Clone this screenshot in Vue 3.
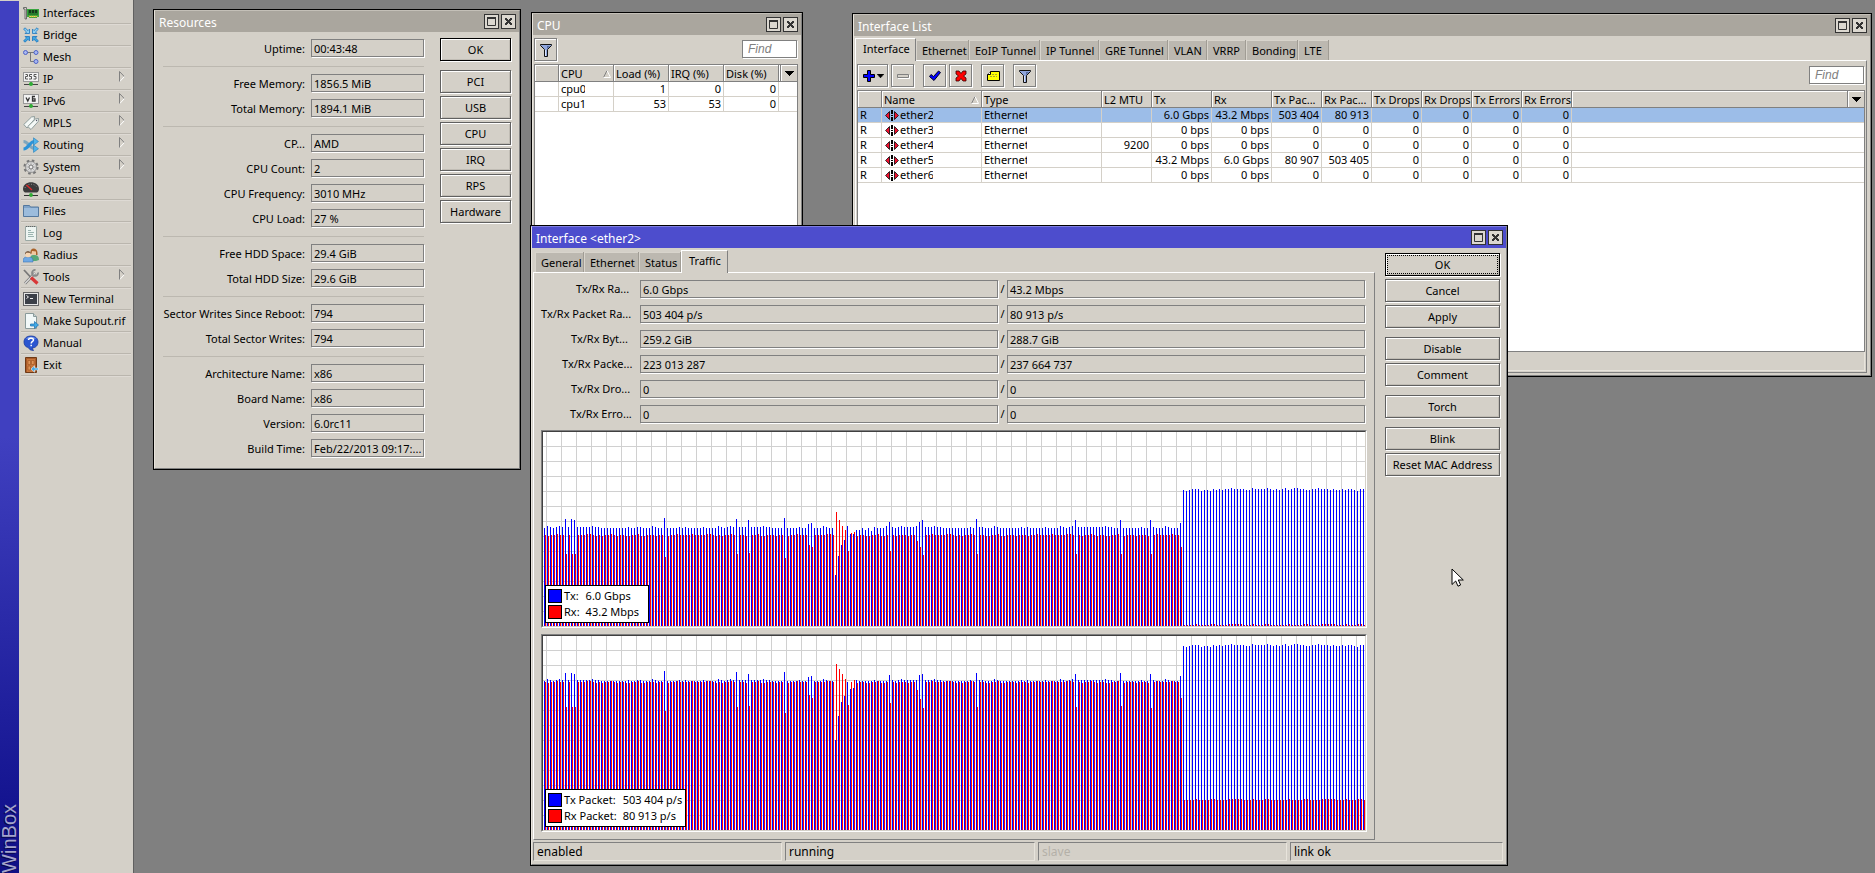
<script setup>
import { ref } from 'vue'

const menu = [
  { id: 'interfaces', label: 'Interfaces' },
  { id: 'bridge', label: 'Bridge' },
  { id: 'mesh', label: 'Mesh' },
  { id: 'ip', label: 'IP', sub: true },
  { id: 'ipv6', label: 'IPv6', sub: true },
  { id: 'mpls', label: 'MPLS', sub: true },
  { id: 'routing', label: 'Routing', sub: true },
  { id: 'system', label: 'System', sub: true },
  { id: 'queues', label: 'Queues' },
  { id: 'files', label: 'Files' },
  { id: 'log', label: 'Log' },
  { id: 'radius', label: 'Radius' },
  { id: 'tools', label: 'Tools', sub: true },
  { id: 'terminal', label: 'New Terminal' },
  { id: 'supout', label: 'Make Supout.rif' },
  { id: 'manual', label: 'Manual' },
  { id: 'exit', label: 'Exit' },
]

const resourceGroups = [
  [['Uptime:', '00:43:48']],
  [['Free Memory:', '1856.5 MiB'], ['Total Memory:', '1894.1 MiB']],
  [['CP...', 'AMD'], ['CPU Count:', '2'], ['CPU Frequency:', '3010 MHz'], ['CPU Load:', '27 %']],
  [['Free HDD Space:', '29.4 GiB'], ['Total HDD Size:', '29.6 GiB']],
  [['Sector Writes Since Reboot:', '794'], ['Total Sector Writes:', '794']],
  [['Architecture Name:', 'x86'], ['Board Name:', 'x86'], ['Version:', '6.0rc11'], ['Build Time:', 'Feb/22/2013 09:17:...']],
]
const resourceButtons = ['PCI', 'USB', 'CPU', 'IRQ', 'RPS', 'Hardware']

const cpuRows = [['cpu0', '1', '0', '0'], ['cpu1', '53', '53', '0']]

const listTabs = ['Interface', 'Ethernet', 'EoIP Tunnel', 'IP Tunnel', 'GRE Tunnel', 'VLAN', 'VRRP', 'Bonding', 'LTE']
const listCols = ['Type', 'L2 MTU', 'Tx', 'Rx', 'Tx Pac...', 'Rx Pac...', 'Tx Drops', 'Rx Drops', 'Tx Errors', 'Rx Errors']
const ifaces = [
  { name: 'ether2', cells: ['', '6.0 Gbps', '43.2 Mbps', '503 404', '80 913', '0', '0', '0', '0'] },
  { name: 'ether3', cells: ['', '0 bps', '0 bps', '0', '0', '0', '0', '0', '0'] },
  { name: 'ether4', cells: ['9200', '0 bps', '0 bps', '0', '0', '0', '0', '0', '0'] },
  { name: 'ether5', cells: ['', '43.2 Mbps', '6.0 Gbps', '80 907', '503 405', '0', '0', '0', '0'] },
  { name: 'ether6', cells: ['', '0 bps', '0 bps', '0', '0', '0', '0', '0', '0'] },
]
const selected = ref('ether2')

const dialogTabs = ['General', 'Ethernet', 'Status', 'Traffic']
const traffic = [
  { label: 'Tx/Rx Ra...', width: 58, tx: '6.0 Gbps', rx: '43.2 Mbps' },
  { label: 'Tx/Rx Packet Ra...', width: 93, tx: '503 404 p/s', rx: '80 913 p/s' },
  { label: 'Tx/Rx Byt...', width: 63, tx: '259.2 GiB', rx: '288.7 GiB' },
  { label: 'Tx/Rx Packe...', width: 72, tx: '223 013 287', rx: '237 664 737' },
  { label: 'Tx/Rx Dro...', width: 63, tx: '0', rx: '0' },
  { label: 'Tx/Rx Erro...', width: 64, tx: '0', rx: '0' },
]
const dialogButtons = [['OK', 'Cancel', 'Apply'], ['Disable', 'Comment'], ['Torch'], ['Blink', 'Reset MAC Address']]

const HEIGHT = 194
const COUNT = 274
const SWITCH = 213
const txWave = '021012111111111121100000000010011000210000000101000001000'
const rxWave = '1011211112111122101011210110011200111011'
const highWave = '1012220110212122322221132222321212312332211223222121121221022'
const highRx = '0000100001100001111100010001100'

function series(base, wave, spikes, high, highBase) {
  return Array.from({ length: COUNT }, (_, i) => {
    if (i >= SWITCH) return highBase + Number(high[(i - SWITCH) % high.length])
    return spikes[i] ?? base + Number(wave[i % wave.length])
  })
}
const bars = (values, offset) =>
  values.map((v, i) => `M${i * 3 + offset} ${HEIGHT - v}h1v${v}h-1z`).join('')

const charts = [
  {
    tx: series(98, txWave, { 7: 107, 9: 107, 10: 106, 40: 108, 64: 107, 68: 106, 80: 108, 88: 102, 89: 103, 97: 51, 98: 70, 99: 81, 100: 86, 101: 100, 102: 92, 103: 92, 104: 96, 105: 96, 107: 96, 109: 95, 114: 100, 115: 104, 124: 100, 125: 104, 126: 106, 144: 107, 177: 106, 192: 106, 202: 106, 212: 103 }, highWave, 135),
    rx: series(90, rxWave, { 7: 72, 9: 72, 10: 72, 40: 69, 64: 72, 68: 73, 80: 68, 88: 81, 89: 79, 97: 114, 98: 106, 99: 100, 100: 96, 101: 75, 102: 93, 103: 94, 115: 75, 124: 85, 125: 79, 126: 71, 144: 72, 177: 72, 192: 72, 202: 72, 212: 79 }, highRx, 1),
    legend: [['Tx:', '6.0 Gbps'], ['Rx:', '43.2 Mbps']],
  },
  {
    tx: series(149, txWave, { 7: 157, 9: 157, 10: 156, 40: 159, 64: 158, 68: 156, 80: 158, 88: 153, 89: 154, 97: 90, 98: 114, 99: 128, 100: 134, 101: 148, 102: 141, 103: 142, 115: 155, 125: 155, 126: 156, 144: 157, 177: 156, 192: 157, 202: 156, 212: 154 }, highWave, 183),
    rx: series(147, rxWave, { 7: 123, 9: 123, 10: 123, 40: 119, 64: 123, 68: 124, 80: 117, 88: 135, 89: 132, 97: 166, 98: 161, 99: 156, 100: 151, 101: 125, 102: 148, 103: 150, 115: 127, 124: 140, 125: 131, 126: 122, 144: 123, 177: 123, 192: 124, 202: 122, 212: 132 }, highRx, 30),
    legend: [['Tx Packet:', '503 404 p/s'], ['Rx Packet:', '80 913 p/s']],
  },
]
const statuses = ['enabled', 'running', 'slave', 'link ok']
</script>

<template>
  <div class="screen">
    <svg class="defs" aria-hidden="true">
      <defs>
        <symbol id="i-max" viewBox="0 0 15 15"><path d="M3 3h9v2H3z" fill="#333" /><path d="M3.500 4v7.500h8V4" fill="none" stroke="#333" /></symbol>
        <symbol id="i-close" viewBox="0 0 15 15"><path d="M4 4h2v1h1v1h1V5h1V4h2v2h-1v1H9v1h1v1h1v2H9v-1H8V9H7v1H6v1H4V9h1V8h1V7H5V6H4z" fill="#333" /></symbol>
        <symbol id="i-filter" viewBox="0 0 16 16"><path d="M2.500 2.500h11v1l-4 4v7h-3v-7l-4-4z" fill="#8fa5dc" stroke="#111" /><path d="M9 4h3L9 7z" fill="#53699f" /><path d="M7 8h1v6H7z" fill="#dbe4fa" /></symbol>
        <symbol id="i-sort" viewBox="0 0 8 8"><path d="M.5 7.500L4 .5" stroke="#808080" fill="none" /><path d="M4 .5l3.500 7h-7" stroke="#fff" fill="none" /></symbol>
        <symbol id="i-down" viewBox="0 0 9 5"><path d="M0 0h9v1H8v1H7v1H6v1H5v1H4V4H3V3H2V2H1V1H0z" /></symbol>
        <symbol id="i-ether" viewBox="0 0 14 11"><path d="M6 0h2v4H6zM6 5h2v1H6zM6 7h2v4H6z" fill="#000" /><path d="M4.500 1.500v8L.6 5.500zM9.500 1.500v8l3.900-4z" fill="#f01030" stroke="#000" stroke-width=".8" /></symbol>

        <symbol id="i-interfaces" viewBox="0 0 16 16"><path d="M.5 2.500h3V14H2V4H.5z" fill="#d8d8d0" stroke="#555" stroke-width=".8" /><path d="M4 4h12v8h-2v1H6v-1H4z" fill="#3aa53f" /><path d="M5 5h10v5H5z" fill="#257a2c" /><path d="M6 5h2v3H6zM9 5h2v3H9zM12 5h2v3h-2z" fill="#14391a" /><path d="M6 11h8v1H6z" fill="#e8dc60" stroke="#b8a020" stroke-dasharray="1 1" stroke-width=".6" /></symbol>
        <symbol id="i-bridge" viewBox="0 0 16 16"><g stroke="#1c75bd" stroke-width=".8"><path d="M6.500 6.500H2l1.500-1.500L.6 2.200 2 .8 5 3.600l1.500-1.500z" fill="#8ccef3" /><path d="M9.500 6.500H14l-1.500-1.500 2.900-2.800L14 .8l-3 2.800-1.500-1.500z" fill="#8ccef3" /><path d="M6.500 9.500H2l1.500 1.500-2.900 2.800L2 15.200l3-2.800 1.500 1.500z" fill="#3ea5e2" /><path d="M9.500 9.500H14l-1.500 1.500 2.900 2.800-1.400 1.400-3-2.800-1.500 1.500z" fill="#3ea5e2" /></g></symbol>
        <symbol id="i-mesh" viewBox="0 0 16 16"><path d="M4 3.500h7M7.500 4v8.500H11" fill="none" stroke="#777" /><g fill="#a9b8f0" stroke="#4e63c8"><circle cx="2.500" cy="3.500" r="2" /><circle cx="13" cy="3.500" r="2" /><circle cx="13" cy="12.500" r="2" /></g></symbol>
        <symbol id="i-ip" viewBox="0 0 16 16"><rect x=".5" y="1.500" width="15" height="9" fill="#f2f2f2" stroke="#999" /><path d="M2.500 3.500h2v2h-2v2.500h2.500M9 3.500H6.500V5.500H8.500v2.500H6M13.500 3.500H11V5.500h2v2.500h-2.500" fill="none" stroke="#555" /><path d="M8 11v2M1 13.500h14" stroke="#444" /><circle cx="8" cy="13" r="2" fill="#2fae35" /></symbol>
        <symbol id="i-ipv6" viewBox="0 0 16 16"><rect x=".5" y="1.500" width="15" height="9" fill="#f2f2f2" stroke="#999" /><path d="M3 4.500l1.800 3.500 1.700-3.500M12 3.500H9.500V8H12V5.800H9.500" fill="none" stroke="#333" stroke-width="1.300" /><path d="M8 11v2M1 13.500h14" stroke="#444" /><circle cx="8" cy="13" r="2" fill="#2fae35" /></symbol>
        <symbol id="i-mpls" viewBox="0 0 16 16"><g fill="#f4f8f6" stroke="#7a8c8c" stroke-width=".8"><path d="M.8 9.500L8.500 2l3-.5-.3 3L4 13z" /><path d="M4.800 11.500L12.500 4l3-.5-.3 3L8 14.500z" /></g><circle cx="13.500" cy="5.500" r=".7" fill="#556" /></symbol>
        <symbol id="i-routing" viewBox="0 0 16 16"><path d="M.5 4.500c5 0 6 7 11 7" fill="none" stroke="#7fa6bd" stroke-width="3" /><path d="M.5 12c5 0 6-7.500 11-7.500" fill="none" stroke="#2c93d8" stroke-width="3.200" /><path d="M10.500.8l5 3.700-5 3.700zM10.500 8l5 3.700-5 3.700z" fill="#4eb3ec" stroke="#2a7fb8" stroke-width=".6" /></symbol>
        <symbol id="i-system" viewBox="0 0 16 16"><circle cx="8" cy="8" r="6.300" fill="none" stroke="#777" stroke-width="2.600" stroke-dasharray="2.500 2.450" /><circle cx="8" cy="8" r="5.500" fill="#d8d8d8" stroke="#888" stroke-width=".8" /><path d="M8 3v10M3 8h10M4.500 4.500l7 7M11.500 4.500l-7 7" stroke="#aaa" stroke-width=".8" /><circle cx="8" cy="8" r="2" fill="#eee" stroke="#777" /></symbol>
        <symbol id="i-queues" viewBox="0 0 16 16"><path d="M0 8c0-9 16-9 16 0 0 2-1 3-2 3.500H2C1 11 0 10 0 8z" fill="#3c3c3c" /><path d="M2 7c1-5 11-5 12 0" fill="none" stroke="#8a8a8a" stroke-dasharray="1 1.500" /><path d="M3.500 4L9 9" stroke="#e32828" stroke-width="1.300" /><path d="M1 14.500h14" stroke="#333" /><circle cx="8" cy="14" r="1.900" fill="#2fae35" /></symbol>
        <symbol id="i-files" viewBox="0 0 16 16"><path d="M.5 2.500h6l1 1.500h8v9.500H.5z" fill="#7fa3c8" stroke="#54789e" /><path d="M1 5h14v8H1z" fill="#9cbcdc" /></symbol>
        <symbol id="i-log" viewBox="0 0 16 16"><path d="M2.500 1.500h11v14h-11z" fill="#eef5f2" stroke="#9aa8a4" /><path d="M3 1.500h10" stroke="#666" stroke-dasharray="1 1" /><path d="M5 5.500h3M5 7.500h6M5 9.500h5M5 11.500h6" stroke="#9bb5b0" /></symbol>
        <symbol id="i-radius" viewBox="0 0 16 16"><path d="M7 14c0-5 1-6 4-6s5 1 5 5l-3 1z" fill="#58a878" /><circle cx="11" cy="5" r="3" fill="#f0c8a0" /><path d="M7.500 6c-1-6 7-6 7 0v2h-1.500V4.500l-4-.5-.5 3z" fill="#a8622a" /><path d="M0 15c0-4 1-5 5-5s5 1 5 5z" fill="#6ea8e4" stroke="#3b72b4" stroke-width=".6" /><circle cx="5" cy="7.500" r="2.800" fill="#f6d6b4" /><path d="M2 7.500c-.5-4.500 6.500-4.500 6 0L7 5.800 3.500 5.600z" fill="#5b3a22" /></symbol>
        <symbol id="i-tools" viewBox="0 0 16 16"><path d="M2 14.500L12 4" stroke="#777" stroke-width="2.600" /><path d="M2 14.500L12 4" stroke="#ddd" stroke-width="1.200" /><path d="M15 3.500a3 3 0 1 1-2.500-2.500" fill="none" stroke="#888" stroke-width="1.800" /><path d="M1 1l6.500 7" stroke="#777" stroke-width="1.800" /><path d="M8 8.500l6.500 6" stroke="#d83838" stroke-width="3.200" /></symbol>
        <symbol id="i-terminal" viewBox="0 0 16 16"><rect x=".5" y="1.500" width="15" height="13" fill="#e6e6e6" stroke="#666" /><rect x="2" y="3" width="12" height="10" fill="#3c4048" /><path d="M3.500 4.500l2 1.500-2 1.500M7 7.500h3" fill="none" stroke="#eee" /></symbol>
        <symbol id="i-supout" viewBox="0 0 16 16"><path d="M2.500.5h8l3 3v12h-11z" fill="#f2f8f8" stroke="#8a9a9a" /><path d="M10.500.5v3h3" fill="#c8d4d4" stroke="#8a9a9a" /><path d="M7.500 11h4V8.500l4 3.500-4 3.500V13h-4z" fill="#3fa9e6" stroke="#1c6fae" stroke-width=".7" /></symbol>
        <symbol id="i-manual" viewBox="0 0 16 16"><path d="M8 1c4.500 0 7 2.500 7 6s-2.500 6-6 6l1.500 2.500C7 15.500 6 14 5.500 12.600 2.500 12 1 10 1 7c0-3.500 2.500-6 7-6z" fill="#2a55d0" stroke="#1a3a9c" stroke-width=".8" /><path d="M3 4c2-3 8-3 10 0-3-1-7-1-10 0z" fill="#7a9cf0" /><path d="M5.500 5c0-2.500 5-2.500 5 0 0 1.500-2.300 1.500-2.300 3.500M8.200 9.700v1.500" fill="none" stroke="#fff" stroke-width="1.500" /></symbol>
        <symbol id="i-exit" viewBox="0 0 16 16"><path d="M2.500.5h11v15h-11z" fill="#a85a28" stroke="#6f3a16" /><path d="M4 2h8v13H4z" fill="#c8763c" /><path d="M5 3.500h2.500v4H5zM8.500 3.500H11v4H8.500zM5 9h2.500v4H5z" fill="#e09458" stroke="#9a5220" stroke-width=".6" /><path d="M15.500 11h-4V8.800L8 12l3.500 3.200V13h4z" fill="#3fa9e6" stroke="#e8f4fc" stroke-width=".6" /></symbol>

        <pattern id="grid" width="15" height="15" patternUnits="userSpaceOnUse">
          <path d="M3 0h1v15h-1zM0 14h15v1H0z" fill="#d0d0d0" />
        </pattern>
      </defs>
    </svg>

    <aside class="stripe"><span class="brand">WinBox</span></aside>
    <nav class="menu">
      <button v-for="m in menu" :key="m.id" type="button" class="menu-item">
        <svg class="menu-icon"><use :href="'#i-' + m.id" /></svg>
        <span class="menu-label">{{ m.label }}</span>
        <svg v-if="m.sub" class="menu-arrow" viewBox="0 0 6 11"><path d="M.5 11V.5l5 5.300" fill="none" stroke="#808080" /><path d="M5.500 5.500L.8 10.500" stroke="#fff" /></svg>
      </button>
    </nav>

    <main class="desktop">
      <section class="win win-resources">
        <div class="win-in">
          <header class="title"><h2>Resources</h2>
            <button type="button" class="tbtn" aria-label="Maximize"><svg><use href="#i-max" /></svg></button>
            <button type="button" class="tbtn" aria-label="Close"><svg><use href="#i-close" /></svg></button>
          </header>
          <div class="res-body">
            <form class="res-form">
              <template v-for="(g, gi) in resourceGroups" :key="gi">
                <hr v-if="gi" />
                <div v-for="(r, ri) in g" :key="ri" class="res-row">
                  <label :for="`res-${gi}-${ri}`">{{ r[0] }}</label>
                  <input :id="`res-${gi}-${ri}`" class="field" readonly :value="r[1]" />
                </div>
              </template>
            </form>
            <div class="btn-groups">
              <div class="btn-group"><button type="button" class="btn primary">OK</button></div>
              <div class="btn-group"><button v-for="b in resourceButtons" :key="b" type="button" class="btn">{{ b }}</button></div>
            </div>
          </div>
        </div>
      </section>

      <section class="win win-cpu">
        <div class="win-in">
          <header class="title"><h2>CPU</h2>
            <button type="button" class="tbtn" aria-label="Maximize"><svg><use href="#i-max" /></svg></button>
            <button type="button" class="tbtn" aria-label="Close"><svg><use href="#i-close" /></svg></button>
          </header>
          <div class="cpu-body">
            <div class="toolbar">
              <button type="button" class="tool" aria-label="Filter"><svg><use href="#i-filter" /></svg></button>
              <input class="find" placeholder="Find" aria-label="Find" />
            </div>
            <div class="grid cpu-grid">
              <table>
                <colgroup><col class="c-flag" /><col class="c55" /><col class="c55" /><col class="c55" /><col class="c55" /><col /><col class="c-menu" /></colgroup>
                <thead><tr>
                  <th></th><th><div class="sorted">CPU<svg class="sort"><use href="#i-sort" /></svg></div></th><th>Load (%)</th><th>IRQ (%)</th><th>Disk (%)</th><th></th>
                  <th class="th-menu"><button type="button" aria-label="Columns"><svg class="down"><use href="#i-down" /></svg></button></th>
                </tr></thead>
                <tbody>
                  <tr v-for="r in cpuRows" :key="r[0]">
                    <td></td><td><span class="clip clip-cpu">{{ r[0] }}</span></td>
                    <td v-for="n in 3" :key="n" class="num">{{ r[n] }}</td><td class="rest" colspan="2"></td>
                  </tr>
                </tbody>
              </table>
            </div>
          </div>
        </div>
      </section>

      <section class="win win-list">
        <div class="win-in">
          <header class="title"><h2>Interface List</h2>
            <button type="button" class="tbtn" aria-label="Maximize"><svg><use href="#i-max" /></svg></button>
            <button type="button" class="tbtn" aria-label="Close"><svg><use href="#i-close" /></svg></button>
          </header>
          <div class="list-body">
            <div class="tabs list-tabs" role="tablist">
              <button v-for="(t, i) in listTabs" :key="t" type="button" role="tab" class="tab" :class="{ active: i === 0 }">{{ t }}</button>
            </div>
            <div class="panel list-panel">
              <div class="toolbar">
                <button type="button" class="tool tool-add" aria-label="Add">
                  <svg viewBox="0 0 16 16"><path d="M6.500 2.500h3v4h4v3h-4v4h-3v-4h-4v-3h4z" fill="#00f" stroke="#000" /></svg>
                  <svg class="down-sm"><use href="#i-down" /></svg>
                </button>
                <button type="button" class="tool" aria-label="Remove"><svg viewBox="0 0 16 16"><path d="M2.500 6.500h11v3h-11z" fill="#d4d0c8" stroke="#808080" /><path d="M3 10.500h11.500V7" fill="none" stroke="#fff" /></svg></button>
                <button type="button" class="tool spaced" aria-label="Enable"><svg viewBox="0 0 16 16"><path d="M2.500 8.500L4 6.500l2.500 2 5-5.500 2 1.500L7 12.500z" fill="#00f" stroke="#002" /></svg></button>
                <button type="button" class="tool" aria-label="Disable"><svg viewBox="0 0 16 16"><path d="M3 3h3l2 2.500L10 3h3v3l-2.500 2L13 10v3h-3L8 10.500 6 13H3v-3l2.500-2L3 6z" fill="#f00" stroke="#300" stroke-width=".8" /></svg></button>
                <button type="button" class="tool spaced" aria-label="Comment"><svg viewBox="0 0 16 16"><path d="M5.500 3.500h9v9h-12v-6z" fill="#ff0" stroke="#000" /><path d="M5.500 3.500v3h-3" fill="#fff" stroke="#000" /><path d="M7 6.500h6M5 8.500h7" stroke="#a8a830" stroke-dasharray="2 1" /></svg></button>
                <button type="button" class="tool spaced" aria-label="Filter"><svg><use href="#i-filter" /></svg></button>
                <input class="find" placeholder="Find" aria-label="Find" />
              </div>
              <div class="grid list-grid">
                <table>
                  <colgroup>
                    <col class="c-flag" /><col class="c100" /><col class="c120" /><col class="c50" /><col class="c60" /><col class="c60" />
                    <col v-for="n in 6" :key="n" class="c50" /><col /><col class="c-menu" />
                  </colgroup>
                  <thead><tr>
                    <th></th><th><div class="sorted">Name<svg class="sort"><use href="#i-sort" /></svg></div></th>
                    <th v-for="c in listCols" :key="c">{{ c }}</th><th></th>
                    <th class="th-menu"><button type="button" aria-label="Columns"><svg class="down"><use href="#i-down" /></svg></button></th>
                  </tr></thead>
                  <tbody>
                    <tr v-for="r in ifaces" :key="r.name" :class="{ selected: r.name === selected }" @click="selected = r.name">
                      <td>R</td>
                      <td><div class="iface"><svg class="ether"><use href="#i-ether" /></svg><span class="clip clip-name">{{ r.name }}</span></div></td>
                      <td><span class="clip clip-type">Ethernet</span></td>
                      <td v-for="(c, i) in r.cells" :key="i" class="num">{{ c }}</td>
                      <td class="rest" colspan="2"></td>
                    </tr>
                  </tbody>
                </table>
              </div>
              <div class="list-status"></div>
            </div>
          </div>
        </div>
      </section>

      <section class="win win-dialog">
        <div class="win-in">
          <header class="title focused"><h2>Interface &lt;ether2&gt;</h2>
            <button type="button" class="tbtn" aria-label="Maximize"><svg><use href="#i-max" /></svg></button>
            <button type="button" class="tbtn" aria-label="Close"><svg><use href="#i-close" /></svg></button>
          </header>
          <div class="dlg-body">
            <div class="dlg-main">
              <div class="tabs dlg-tabs" role="tablist">
                <button v-for="t in dialogTabs" :key="t" type="button" role="tab" class="tab" :class="{ active: t === 'Traffic' }">{{ t }}</button>
              </div>
              <div class="panel traffic">
                <div v-for="(r, i) in traffic" :key="i" class="traffic-row">
                  <label :for="'tx-' + i"><span :style="{ width: r.width + 'px' }">{{ r.label }}</span></label>
                  <input :id="'tx-' + i" class="field" readonly :value="r.tx" />
                  <span class="slash">/</span>
                  <input class="field" readonly :value="r.rx" :aria-label="r.label" />
                </div>
                <figure v-for="(c, i) in charts" :key="i" class="chart">
                  <svg class="plot" shape-rendering="crispEdges">
                    <rect width="100%" height="100%" fill="#fff" />
                    <rect width="100%" height="100%" fill="url(#grid)" />
                    <path :d="bars(c.tx, 1)" fill="#00f" />
                    <path :d="bars(c.rx, 2)" fill="#f00" />
                  </svg>
                  <figcaption class="legend">
                    <template v-for="(l, k) in c.legend" :key="k">
                      <i class="swatch" :class="{ rx: k === 1 }"></i><span>{{ l[0] }}</span><span>{{ l[1] }}</span>
                    </template>
                  </figcaption>
                </figure>
              </div>
            </div>
            <div class="btn-groups">
              <div v-for="(g, i) in dialogButtons" :key="i" class="btn-group">
                <button v-for="b in g" :key="b" type="button" class="btn" :class="{ primary: b === 'OK', dotted: b === 'OK' }">{{ b }}</button>
              </div>
            </div>
          </div>
          <footer class="status">
            <span v-for="s in statuses" :key="s" :class="{ off: s === 'slave' }">{{ s }}</span>
          </footer>
        </div>
      </section>

      <svg class="cursor" viewBox="0 0 14 20"><path d="M1 1v15.500l3.700-3.500 2.300 5.200 2.600-1.200-2.300-5h5z" fill="#fff" stroke="#000" /></svg>
    </main>
  </div>
</template>

<style>
body { margin: 0; background: #808080; }
</style>

<style scoped>
* { box-sizing: border-box; }
.screen {
  display: flex; position: relative; min-height: 100vh; overflow: hidden;
  background: #808080; color: #000; font: 11px/16px "Noto Sans", sans-serif;
}
button, input { font: inherit; color: inherit; margin: 0; padding: 0; border: 0; background: none; border-radius: 0; }
.defs { position: absolute; width: 0; height: 0; }

.stripe {
  width: 19px; display: flex; align-items: flex-end; justify-content: center;
  background: linear-gradient(#4040c0 0%, #4040c0 50%, #141490 92%, #101084 100%); border-top: 1px solid #d4d0c8;
}
.brand {
  writing-mode: vertical-rl; transform: rotate(180deg); color: #a4a4cc; text-shadow: -1px -1px 0 #08084c;
  font: 20px/19px "Liberation Sans", Arial, sans-serif;
}
.menu { width: 115px; padding: 2px 2px 0; background: #d4d0c8; border-right: 1px solid #606060; display: flex; flex-direction: column; }
.menu-item {
  height: 22px; padding: 0 6px 0 2px; display: flex; align-items: center; gap: 4px; text-align: left;
  border-bottom: 1px solid #bab6ae; box-shadow: 0 1px 0 #dedad4; white-space: nowrap;
}
.menu-icon { width: 16px; height: 16px; flex: none; }
.menu-label { flex: 1; padding-top: 1px; }
.menu-arrow { width: 6px; height: 11px; margin-bottom: 4px; }

.desktop { flex: 1; min-width: 0; }
.win { position: absolute; border: 1px solid #000; background: #d4d0c8; }
.win-in { border: 1px solid; border-color: #c4c0b8 #808080 #808080 #e8e4dc; }
.win-resources { left: 153px; top: 9px; width: 368px; }
.win-cpu { left: 531px; top: 12px; width: 272px; }
.win-list { left: 852px; top: 13px; right: 3px; }
.win-dialog { left: 530px; top: 225px; width: 978px; }
.win-dialog .win-in { border-top-color: #7f7fe0; }
.title { display: flex; align-items: center; gap: 2px; height: 21px; padding: 0 3px 0 4px; background: #aaa69e; color: #fff; }
.title.focused { background: #4d4dcd; }
.title h2 { flex: 1; margin: 0; padding-top: 2px; font: 12px/19px "Noto Sans", sans-serif; }
.tbtn { width: 15px; height: 15px; border: 1px solid #333; background: #dcd8d0; position: relative; }
.tbtn svg { position: absolute; left: -1px; top: -1px; width: 15px; height: 15px; }

.field {
  display: block; height: 18px; min-width: 0; padding: 1px 2px 0; border: 1px solid #808080; background: #d4d0c8;
  box-shadow: 1px 1px 0 #fff; outline: 0;
}
.btn {
  height: 23px; padding: 1px 0 0; border: 1px solid #606060; background: #d4d0c8; text-align: center; white-space: nowrap;
  box-shadow: 1px 1px 0 #fff, inset 1px 1px 0 #fff, inset -1px -1px 0 #c0bcb4;
}
.btn.primary { border-color: #000; }
.btn.dotted { outline: 1px dotted #000; outline-offset: -3px; }
.btn-groups { display: flex; flex-direction: column; gap: 9px; }
.btn-group { display: flex; flex-direction: column; gap: 3px; }

.res-body { display: flex; gap: 16px; padding: 6px 8px 11px; }
.res-form { flex: 1; display: flex; flex-direction: column; gap: 7px; padding-top: 1px; }
.res-form hr { width: 100%; height: 1px; margin: 2px 0 0; border: 0; background: #bcb8b0; }
.res-row { display: flex; gap: 6px; align-items: center; }
.res-row label { flex: 1; height: 18px; line-height: 19px; text-align: right; white-space: nowrap; }
.res-row .field { width: 113px; }
.res-body .btn-groups { width: 71px; }

.cpu-body { padding: 3px 3px 3px 1px; }
.toolbar { display: flex; align-items: flex-start; gap: 3px; height: 26px; }
.tool {
  width: 23px; height: 23px; display: flex; align-items: center; justify-content: center;
  border: 1px solid #808080; box-shadow: 1px 1px 0 #fff, inset 1px 1px 0 #fff;
}
.tool svg { width: 16px; height: 16px; flex: none; }
.tool-add { width: 31px; }
.tool .down-sm { width: 7px; height: 4px; }
.tool.spaced { margin-left: 6px; }
.find {
  width: 55px; height: 18px; margin: 2px 1px 0 auto; padding: 0 5px; background: #fff; border: 1px solid #808080; box-shadow: 1px 1px 0 #fff;
  font: italic 12px/16px "Liberation Sans", Arial, sans-serif;
}
.find::placeholder { color: #808080; opacity: 1; }

.grid { border: 1px solid #808080; background: #fff; }
.cpu-grid { min-height: 178px; }
.list-grid { min-height: 262px; }
table { width: 100%; table-layout: fixed; border-collapse: separate; border-spacing: 0; }
.c-flag { width: 24px; } .c50 { width: 50px; } .c55 { width: 55px; } .c60 { width: 60px; }
.c100 { width: 100px; } .c120 { width: 120px; } .c-menu { width: 16px; }
th, td { padding: 0 2px; white-space: nowrap; overflow: hidden; font-weight: normal; text-align: left; }
th { height: 17px; padding-top: 1px; line-height: 15px; background: #d4d0c8; border-right: 1px solid #808080; border-bottom: 1px solid #808080; box-shadow: inset 1px 1px 0 #fff; }
th.th-menu { border-right: 0; padding: 0; text-align: center; }
th button { display: flex; width: 100%; height: 16px; align-items: center; justify-content: center; }
.down { width: 9px; height: 5px; }
.sorted { display: flex; justify-content: space-between; align-items: center; }
.sort { width: 8px; height: 8px; }
td { height: 15px; line-height: 14px; border-right: 1px solid #d4d0c8; border-bottom: 1px solid #d4d0c8; }
td.rest { border-right: 0; }
.num { text-align: right; }
.selected td { background: #9cbde8; }
.clip { display: block; overflow: hidden; height: 14px; }
.clip-cpu { width: 24px; } .clip-name { width: 33px; } .clip-type { width: 43px; }
.iface { display: flex; align-items: center; gap: 1px; padding-left: 1px; }
.ether { width: 14px; height: 11px; flex: none; }

.list-body { padding: 2px 3px 2px 1px; }
.tabs { display: grid; align-items: end; height: 22px; }
.list-tabs { grid-template-columns: 61px 53px 71px 59px 69px 39px 39px 52px 31px; }
.dlg-tabs { grid-template-columns: 49px 55px 42px 47px; }
.tab {
  height: 20px; padding: 2px 0 0 6px; background: #bcb8b0; border-right: 1px solid #a09c94; box-shadow: inset 1px 1px 0 #d8d4cc;
  line-height: 16px; white-space: nowrap; text-align: left;
}
.tab.active {
  position: relative; height: 23px; margin-bottom: -1px; padding: 0 0 2px 7px; background: #d4d0c8;
  border: 1px solid; border-color: #fff #808080 transparent #fff; border-bottom: 0; box-shadow: none;
}
.panel { border: 1px solid; border-color: #fff #808080 #808080 #fff; }
.list-panel { padding: 3px 1px 1px; }
.list-status { height: 19px; border-bottom: 1px solid #e8e4dc; border-right: 1px solid #e8e4dc; }

.dlg-body { display: flex; gap: 10px; padding: 2px 6px 0 1px; }
.dlg-main { flex: 1; min-width: 0; }
.dlg-body .btn-groups { width: 115px; padding-top: 3px; }
.dlg-main .tabs { padding-left: 2px; }
.traffic { display: flex; flex-direction: column; gap: 7px; padding: 7px; }
.traffic-row { display: flex; align-items: center; margin-right: 2px; }
.traffic-row label { width: 93px; margin-right: 6px; display: flex; justify-content: flex-end; white-space: nowrap; line-height: 18px; }
.traffic-row .field { flex: 1; }
.slash { width: 9px; text-align: center; line-height: 18px; height: 18px; }
.chart { position: relative; margin: 0; border: 1px solid; border-color: #808080 #fff #fff #808080; }
.chart + .chart { margin-top: -1px; }
.plot { display: block; width: 100%; height: 196px; border: 1px solid; border-color: #404040 #d4d0c8 #d4d0c8 #404040; }
.legend {
  position: absolute; left: 3px; bottom: 4px; display: grid; grid-template-columns: 14px auto auto; gap: 2px 2px; align-items: center;
  padding: 3px 9px 3px 2px; background: #fff; border: 1px solid #000; line-height: 14px; white-space: nowrap;
}
.legend span:nth-child(3n) { padding-left: 4px; }
.chart + .chart .legend { padding-right: 3px; }
.swatch { width: 14px; height: 14px; border: 1px solid #000; background: #00f; }
.swatch.rx { background: #f00; }
.status { display: grid; grid-template-columns: 249px 250px 249px 1fr; gap: 3px; padding: 2px 3px 3px 1px; }
.status span { height: 19px; padding-left: 3px; line-height: 18px; border: 1px solid; border-color: #808080 #e8e4dc #e8e4dc #808080; font-size: 12px; }
.status .off { color: #b4b0a8; }
.cursor { position: absolute; left: 1451px; top: 568px; width: 14px; height: 20px; }
</style>
